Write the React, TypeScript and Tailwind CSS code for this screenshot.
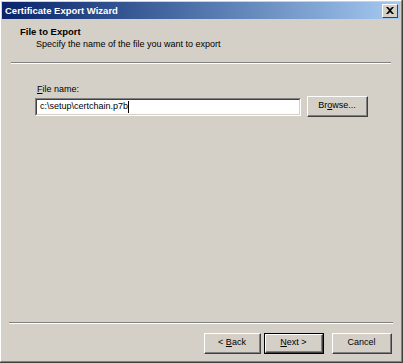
import React from 'react';

const font = { fontFamily: '"Liberation Sans", Arial, sans-serif' };

const Btn: React.FC<{ children: React.ReactNode; w: string; primary?: boolean }> = ({ children, w, primary }) => (
  <div className={`${w} h-[21px] ${primary ? 'border border-black' : ''}`}>
    <div className="h-full w-full border-t border-l border-white border-r border-b border-r-[#404040] border-b-[#404040]">
      <div className="h-full w-full border-r border-b border-r-[#808080] border-b-[#808080] flex items-center justify-center text-[9px] text-black">
        {children}
      </div>
    </div>
  </div>
);

const Separator: React.FC<{ className?: string }> = ({ className }) => (
  <div className={`border-t border-t-[#808080] border-b border-b-white ${className ?? ''}`} />
);

export default function App() {
  return (
    <div className="w-[403px] h-[363px] bg-[#d4d0c8] border-r border-b border-r-[#404040] border-b-[#404040]" style={font}>
      <div className="h-full border-t border-l border-white border-r border-b border-r-[#808080] border-b-[#808080] p-[1px] flex flex-col">
        {/* title bar */}
        <div className="h-[17px] flex items-center justify-between pl-[3px] pr-[2px] bg-gradient-to-r from-[#0a246a] to-[#a6caf0]">
          <span className="text-white font-bold text-[9.5px] leading-none">Certificate Export Wizard</span>
          <div className="w-[16px] h-[14px] bg-[#d4d0c8] border-t border-l border-white border-r border-b border-r-[#404040] border-b-[#404040] flex items-center justify-center">
            <svg width="8" height="7" viewBox="0 0 8 7">
              <path d="M0 0h2l2 2 2-2h2L5 3.5 8 7H6L4 5 2 7H0l3-3.5z" fill="#000" />
            </svg>
          </div>
        </div>

        {/* header */}
        <div className="pl-[18px] pt-[7px] leading-[12px] text-black">
          <div className="font-bold text-[9.5px]">File to Export</div>
          <div className="pl-[16px] text-[9px]">Specify the name of the file you want to export</div>
        </div>
        <Separator className="mx-[9px] mt-[12px]" />

        {/* content */}
        <div className="pl-[33px] pt-[19px] text-[9px] text-black">
          <div className="leading-[12px] pl-[2px]">
            <span className="underline">F</span>ile name:
          </div>
          <div className="flex items-center gap-[6px] mt-[1px]">
            <div className="w-[266px] h-[18px] bg-white border-t border-l border-t-[#808080] border-l-[#808080] border-r border-b border-white">
              <div className="h-full border-t border-l border-t-[#404040] border-l-[#404040] border-r border-b border-r-[#d4d0c8] border-b-[#d4d0c8] flex items-center pl-[3px]">
                <span>c:\setup\certchain.p7b</span>
                <span className="w-[1px] h-[12px] bg-black" />
              </div>
            </div>
            <Btn w="w-[61px]">
              <span>
                Br<span className="underline">o</span>wse...
              </span>
            </Btn>
          </div>
        </div>

        <div className="flex-1" />

        <Separator className="mx-[7px]" />
        <div className="flex justify-end items-center pr-[8px] pt-[9px] pb-[6px]">
          <Btn w="w-[57px]">
            <span>
              &lt; <span className="underline">B</span>ack
            </span>
          </Btn>
          <div className="w-[3px]" />
          <Btn w="w-[60px]" primary>
            <span>
              <span className="underline">N</span>ext &gt;
            </span>
          </Btn>
          <div className="w-[8px]" />
          <Btn w="w-[60px]">Cancel</Btn>
        </div>
      </div>
    </div>
  );
}
